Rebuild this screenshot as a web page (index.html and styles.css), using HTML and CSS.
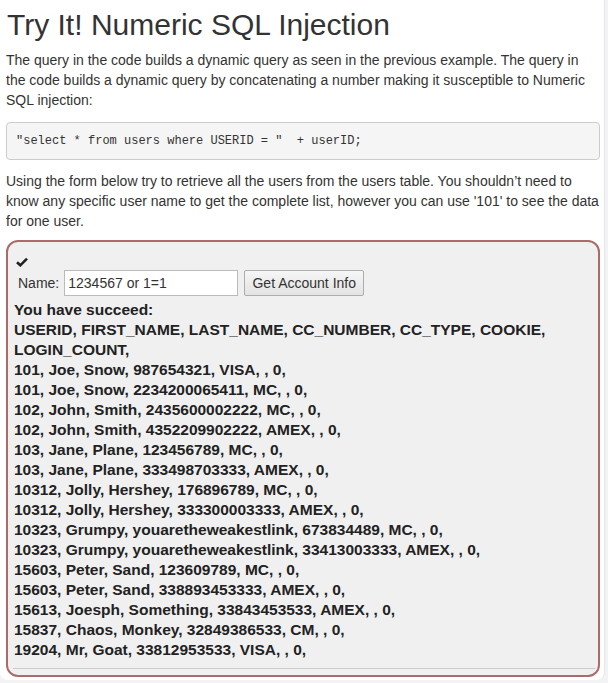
FILE: index.html
```html
<!DOCTYPE html>
<html>
<head>
<meta charset="utf-8">
<link rel="stylesheet" href="styles.css">
</head>
<body>
<div class="page">
  <h1 class="title">Try It! Numeric SQL Injection</h1>
  <p class="text">The query in the code builds a dynamic query as seen in the previous example. The query in the code builds a dynamic query by concatenating a number making it susceptible to Numeric SQL injection:</p>
  <pre class="code">"select * from users where USERID = "  + userID;</pre>
  <p class="text">Using the form below try to retrieve all the users from the users table. You shouldn’t need to know any specific user name to get the complete list, however you can use '101' to see the data for one user.</p>
  <div class="attack">
    <div class="check"><svg width="12" height="10" viewBox="0 0 12 10"><path d="M1 5.2 L4.3 8.3 L11 1.6" fill="none" stroke="#222" stroke-width="2.6"/></svg></div>
    <form class="form">
      <label class="label">Name:</label>
      <input class="input" type="text" value="1234567 or 1=1">
      <button class="btn" type="button">Get Account Info</button>
    </form>
    <div class="output">
      <div>You have succeed:</div>
      <div>USERID, FIRST_NAME, LAST_NAME, CC_NUMBER, CC_TYPE, COOKIE, LOGIN_COUNT,</div>
      <div>101, Joe, Snow, 987654321, VISA, , 0,</div>
      <div>101, Joe, Snow, 2234200065411, MC, , 0,</div>
      <div>102, John, Smith, 2435600002222, MC, , 0,</div>
      <div>102, John, Smith, 4352209902222, AMEX, , 0,</div>
      <div>103, Jane, Plane, 123456789, MC, , 0,</div>
      <div>103, Jane, Plane, 333498703333, AMEX, , 0,</div>
      <div>10312, Jolly, Hershey, 176896789, MC, , 0,</div>
      <div>10312, Jolly, Hershey, 333300003333, AMEX, , 0,</div>
      <div>10323, Grumpy, youaretheweakestlink, 673834489, MC, , 0,</div>
      <div>10323, Grumpy, youaretheweakestlink, 33413003333, AMEX, , 0,</div>
      <div>15603, Peter, Sand, 123609789, MC, , 0,</div>
      <div>15603, Peter, Sand, 338893453333, AMEX, , 0,</div>
      <div>15613, Joesph, Something, 33843453533, AMEX, , 0,</div>
      <div>15837, Chaos, Monkey, 32849386533, CM, , 0,</div>
      <div>19204, Mr, Goat, 33812953533, VISA, , 0,</div>
    </div>
    <hr class="rule">
  </div>
</div>
</body>
</html>
```
FILE: styles.css
```css
* { box-sizing: border-box; }
html, body { margin: 0; padding: 0; }
body {
  background: #f3f3f5;
  font-family: "Liberation Sans", Arial, sans-serif;
  color: #333;
  font-size: 14px;
  line-height: 20px;
}
.page {
  width: 605px;
  height: 680px;
  background: #fff;
  border-right: 1px solid #e6e6ea;
  border-radius: 0 0 8px 8px;
  padding: 0 4px 0 6px;
  overflow: hidden;
}
.title {
  margin: 0;
  padding-top: 7px;
  font-size: 30px;
  line-height: 36px;
  font-weight: 400;
  color: #333;
  margin-left: 1px;
}
.text {
  margin: 7px 0 0 0;
}
.code {
  margin: 12px 0 0 0;
  height: 38px;
  padding: 9px 9px;
  background: #f5f5f5;
  border: 1px solid #ccc;
  border-radius: 4px;
  font-family: "Liberation Mono", "DejaVu Sans Mono", monospace;
  font-size: 12px;
  line-height: 18px;
  color: #333;
}
.code + .text { margin-top: 11px; }
.attack {
  margin-top: 9px;
  height: 437px;
  background: #f0f0f0;
  border: 2px solid #ad6a6a;
  border-radius: 12px;
  padding: 7px 6px 0 6px;
}
.check {
  height: 18px;
  padding-left: 2px;
  padding-top: 3px;
}
.form {
  display: flex;
  align-items: center;
  margin: 3px 0 0 0;
  height: 26px;
}
.label {
  margin-left: 4px;
  margin-right: 5px;
}
.input {
  width: 174px;
  height: 26px;
  border: 1px solid #bbb;
  background: #fff;
  font-family: "Liberation Sans", Arial, sans-serif;
  font-size: 14px;
  color: #333;
  padding: 0 3px;
  margin: 0;
}
.btn {
  margin-left: 6px;
  height: 26px;
  width: 120px;
  border: 1px solid #adadad;
  border-radius: 2px;
  background: linear-gradient(#f6f6f6, #e3e3e3);
  font-family: "Liberation Sans", Arial, sans-serif;
  font-size: 14px;
  color: #333;
  padding: 0;
}
.output {
  margin-top: 4px;
  font-weight: 700;
  font-size: 15.5px;
  line-height: 20px;
  color: #222;
  padding-left: 0;
}
.rule {
  margin: 8px 0 0 -1px;
  border: 0;
  border-top: 1px solid #ccc;
  width: 582px;
}
```
